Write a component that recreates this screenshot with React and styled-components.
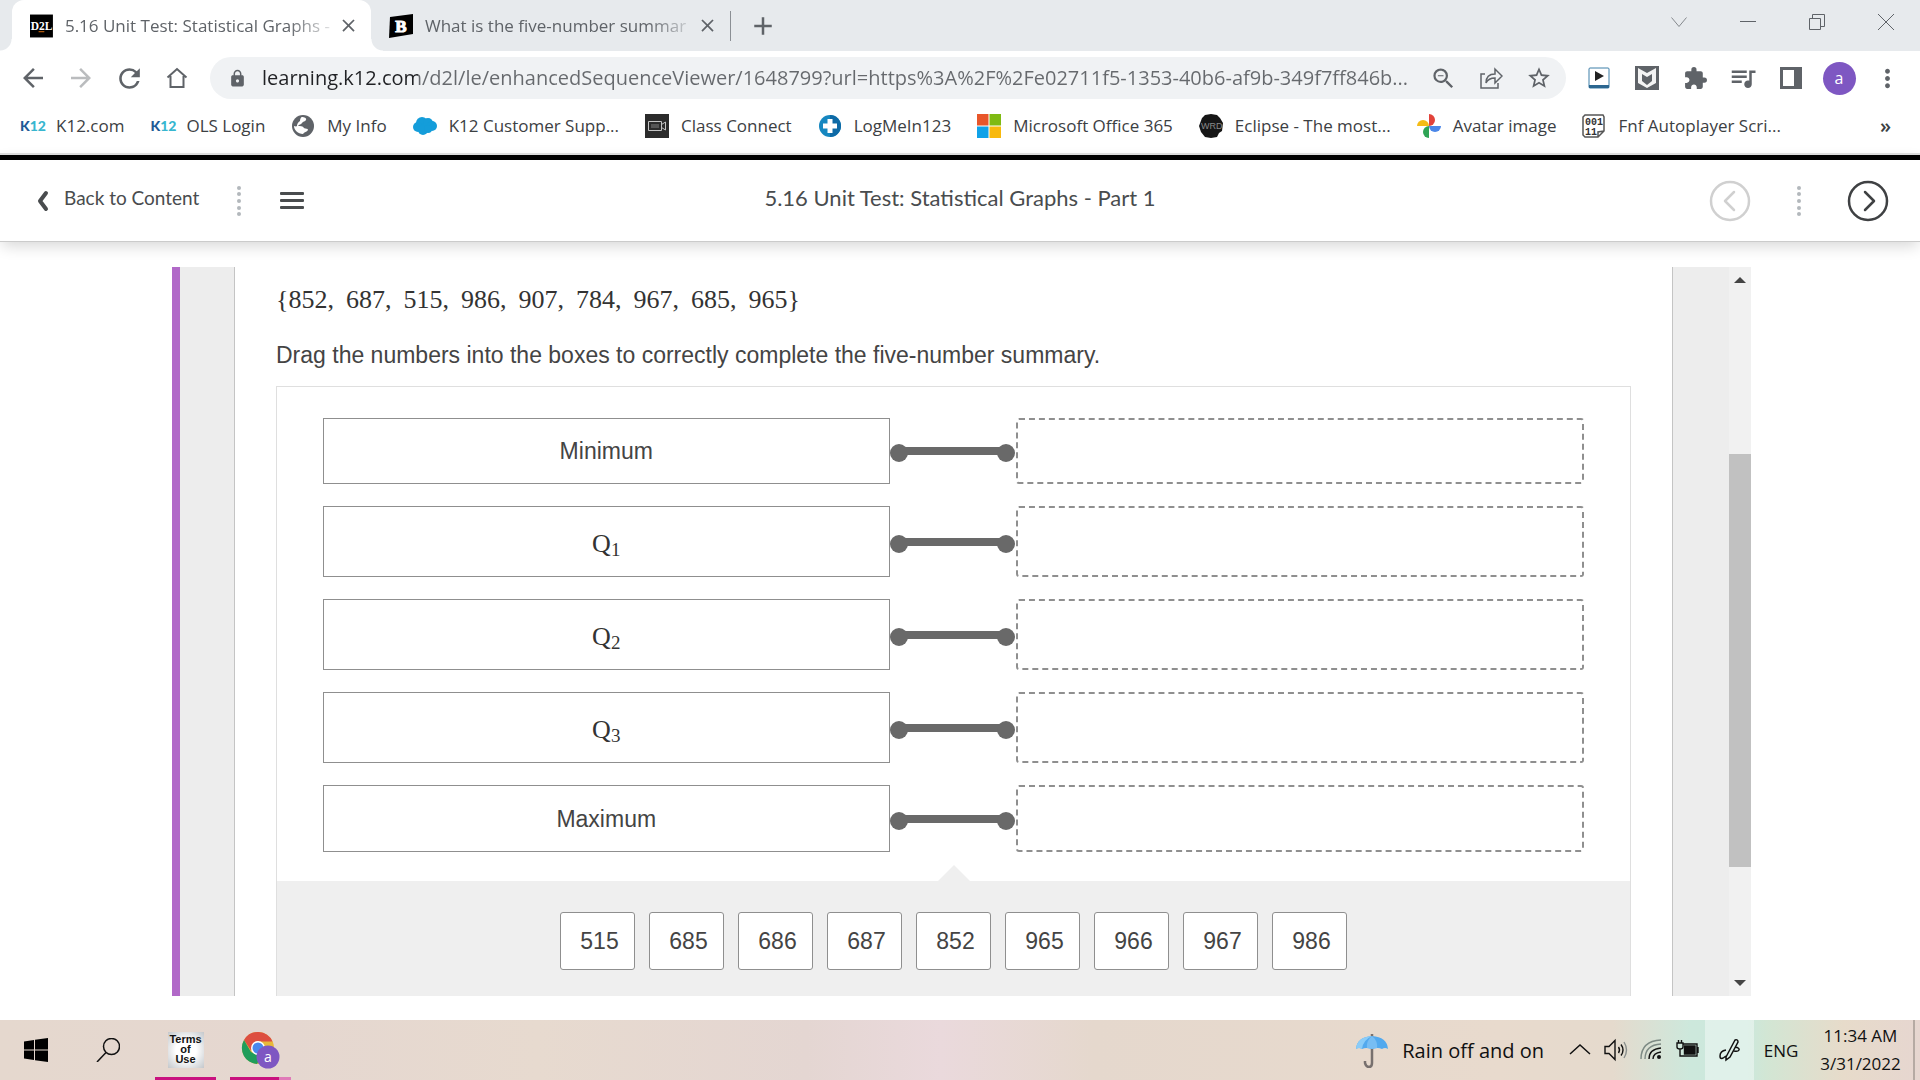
import React from "react";
import styled, { createGlobalStyle, css } from "styled-components";
import {
  MdArrowBack,
  MdArrowForward,
  MdRefresh,
  MdLock,
  MdZoomOut,
  MdStarBorder,
  MdExtension,
  MdQueueMusic,
  MdMoreVert,
  MdClose,
  MdAdd,
} from "react-icons/md";

const GlobalStyle = createGlobalStyle`
  * { box-sizing: border-box; }
  body { margin: 0; background: #fff; }
  button, input { font: inherit; color: inherit; }
  button { border: 0; padding: 0; background: none; cursor: pointer; }
`;

const segoe = `"Open Sans", "Noto Sans", sans-serif`;
const arial = `"Liberation Sans", Arial, sans-serif`;

const Screen = styled.div`
  display: flex;
  flex-direction: column;
  height: 100vh;
  overflow: hidden;
  font-family: ${segoe};
`;

/* ---------- browser chrome ---------- */

const TabStrip = styled.div`
  display: flex;
  align-items: stretch;
  height: 51px;
  padding-left: 12px;
  background: #e7eaed;
  color: #5f6368;
`;

/* the active tab flares out at its foot */
const flare = css`
  position: relative;
  background: #fff;
  &::before,
  &::after {
    content: "";
    position: absolute;
    bottom: 0;
    width: 12px;
    height: 12px;
  }
  &::before {
    right: 100%;
    background: radial-gradient(circle at 0 0, transparent 11px, #fff 12px);
  }
  &::after {
    left: 100%;
    background: radial-gradient(circle at 100% 0, transparent 11px, #fff 12px);
  }
`;

const Tab = styled.div`
  display: flex;
  align-items: center;
  width: 359px;
  padding: 0 11px 0 18px;
  border-radius: 12px 12px 0 0;
  ${(p) => p.$active && flare}
`;

const TabTitle = styled.button`
  flex: 1;
  margin: 0 6px 0 12px;
  white-space: nowrap;
  text-align: left;
  font-size: 17px;
  line-height: 24px;
  mask-image: linear-gradient(to right, #000 84%, rgba(0, 0, 0, 0.2));
`;

const IconButton = styled.button`
  display: flex;
  align-items: center;
  justify-content: center;
  width: ${(p) => p.$w || 48}px;
  height: 32px;
  flex: none;
  color: ${(p) => p.$color || "#5f6368"};
`;

const TabDivider = styled.span`
  align-self: center;
  width: 1px;
  height: 30px;
  background: #8b8f94;
`;

const NewTab = styled(IconButton)`
  align-self: center;
  margin-left: 8px;
`;

const WindowButtons = styled.div`
  display: flex;
  align-items: center;
  height: 44px;
  margin-left: auto;
`;

const Toolbar = styled.div`
  display: flex;
  align-items: center;
  height: 54px;
  padding: 0 9px;
`;

const Omnibox = styled.form`
  display: flex;
  flex: 1;
  align-items: center;
  height: 42px;
  margin: 0 9px;
  padding: 0 3px 0 18px;
  border-radius: 21px;
  background: #f0f2f4;
  color: #5f6368;
`;

/* host in dark, path in grey */
const Address = styled.input`
  flex: 1;
  min-width: 0;
  margin-left: 15px;
  padding: 0;
  border: 0;
  outline: 0;
  font-size: 20px;
  line-height: 30px;
  color: transparent;
  background: linear-gradient(to right, #202124 156px, #66696d 156px);
  background-clip: text;
`;

const Bookmarks = styled.nav`
  display: flex;
  align-items: center;
  height: 48px;
  padding: 0 29px 6px 20px;
  gap: 26px;
`;

const Bookmark = styled.a`
  display: flex;
  align-items: center;
  gap: 12px;
  font-size: 17px;
  line-height: 24px;
  color: #3c4043;
  text-decoration: none;
  white-space: nowrap;
`;

const MoreBookmarks = styled.button`
  margin-left: auto;
  font-size: 20px;
  font-weight: 600;
  line-height: 24px;
  color: #3c4043;
`;

const K12Mark = styled.span`
  width: 24px;
  font-family: Lato, sans-serif;
  font-size: 14px;
  font-weight: 900;
  line-height: 24px;
  color: #38b6cf;
  & b { color: #1d5a96; }
`;

const bookmarks = [
  { label: "K12.com", icon: "k12" },
  { label: "OLS Login", icon: "k12" },
  { label: "My Info", icon: "globe" },
  { label: "K12 Customer Supp...", icon: "cloud" },
  { label: "Class Connect", icon: "camera" },
  { label: "LogMeIn123", icon: "plus" },
  { label: "Microsoft Office 365", icon: "ms" },
  { label: "Eclipse - The most...", icon: "wrd" },
  { label: "Avatar image", icon: "photos" },
  { label: "Fnf Autoplayer Scri...", icon: "script" },
];

const drawings = {
  globe: (
    <>
      <circle cx="12" cy="12" r="11" fill="#5f6368" />
      <path
        d="M11 3c2 0 5 1 4 3-1 2-3 1-4 3s-3 1-4 3c2 0 5 0 6 2 1 1 4 0 4 2-1 2-4 2-5 4-5 0-9-4-9-8 1 0 2 1 3 0 0-2 1-4 3-5 0-2 1-4 2-4z"
        fill="#fff"
      />
    </>
  ),
  cloud: (
    <g fill="#149dda">
      <circle cx="9" cy="9" r="6" />
      <circle cx="5" cy="13" r="5" />
      <circle cx="15" cy="9" r="5" />
      <circle cx="19" cy="12" r="5" />
      <circle cx="10" cy="16" r="5" />
      <circle cx="15" cy="15" r="4" />
    </g>
  ),
  camera: (
    <>
      <path d="M0 0h24v24H0z" fill="#2b2b2b" />
      <path
        d="M3.500 7.500h13v9h-13zM16.500 10.500l4-2.500v8l-4-2.500"
        fill="none"
        stroke="#c4c4c4"
      />
      <path d="M6 10h8v4H6z" fill="#555" />
    </>
  ),
  plus: (
    <>
      <circle cx="12" cy="12" r="11" fill="#1687c0" />
      <path d="M12 1a11 11 0 0 1 0 22z" fill="#0e6aa6" />
      <path d="M9.500 5h5v4.500H19v5h-4.500V19h-5v-4.500H5v-5h4.500z" fill="#fff" />
    </>
  ),
  ms: (
    <>
      <path d="M0 0h11.500v11.500H0z" fill="#e8562a" />
      <path d="M12.500 0H24v11.500H12.500z" fill="#7fba13" />
      <path d="M0 12.500h11.500V24H0z" fill="#10a2e8" />
      <path d="M12.500 12.500H24V24H12.500z" fill="#f8b90d" />
    </>
  ),
  wrd: (
    <>
      <path
        d="M3 4l3-3 6-1 6 1 3 3 3 5-1 8-3 2-2 4-6 1-6-1-4-5-2-6z"
        fill="#161616"
      />
      <text x="2" y="15" fontSize="9" fill="#8a8a8a" fontFamily="Liberation Sans">
        WRD
      </text>
    </>
  ),
  photos: (
    <>
      <path d="M12 0a6 6 0 0 1 0 12z" fill="#e2423a" />
      <path d="M24 12a6 6 0 0 1-12 0z" fill="#4a86e8" />
      <path d="M12 24a6 6 0 0 1 0-12z" fill="#2fa455" />
      <path d="M0 12a6 6 0 0 1 12 0z" fill="#f5bc16" />
    </>
  ),
  script: (
    <>
      <path
        d="M3 1h18l1 2v14l-6 6H3l-2-2V3zM16 23v-5l6-1"
        fill="#fff"
        stroke="#555"
        strokeWidth="1.500"
      />
      <g fontSize="10" fontWeight="700" fontFamily="Liberation Mono" fill="#333">
        <text x="3" y="11">001</text>
        <text x="3" y="21">11</text>
      </g>
    </>
  ),
};

const Favicon = ({ name }) =>
  name === "k12" ? (
    <K12Mark>
      <b>K</b>12
    </K12Mark>
  ) : (
    <svg width="24" height="24" viewBox="0 0 24 24" aria-hidden="true">
      {drawings[name]}
    </svg>
  );

/* thin line icon, used for the window buttons and the tray */
const Line = ({ d, size = 24, width = 1, color = "currentColor", children }) => (
  <svg
    width={size}
    height={size}
    viewBox="0 0 24 24"
    fill="none"
    stroke={color}
    strokeWidth={width}
    aria-hidden="true"
  >
    <path d={d} />
    {children}
  </svg>
);

const ProfileButton = styled(IconButton)`
  & span {
    width: 33px;
    height: 33px;
    border-radius: 50%;
    background: #7e57c2;
    color: #fff;
    font-size: 16px;
    line-height: 32px;
  }
`;

const Browser = () => (
  <header>
    <TabStrip>
      <Tab $active>
        <svg width="24" height="24" viewBox="0 0 24 24" aria-hidden="true">
          <path d="M0 0h24v24H0z" />
          <text
            x="12"
            y="16"
            fontSize="12"
            fontWeight="700"
            textAnchor="middle"
            fill="#fff"
            fontFamily="Liberation Serif"
          >
            D2L
          </text>
          <path d="M9 18h6" stroke="#e87511" />
        </svg>
        <TabTitle>5.16 Unit Test: Statistical Graphs -</TabTitle>
        <IconButton $w={24} aria-label="Close tab">
          <MdClose size={21} />
        </IconButton>
      </Tab>
      <Tab>
        <svg width="24" height="24" viewBox="0 0 24 24" aria-hidden="true">
          <path d="M1 3l23-3v20L0 24z" />
          <text
            x="12"
            y="18"
            fontSize="17"
            fontWeight="700"
            textAnchor="middle"
            fill="#fff"
            stroke="#fff"
            fontFamily="Liberation Serif"
          >
            B
          </text>
        </svg>
        <TabTitle>What is the five-number summar</TabTitle>
        <IconButton $w={24} aria-label="Close tab">
          <MdClose size={21} />
        </IconButton>
      </Tab>
      <TabDivider />
      <NewTab aria-label="New tab">
        <MdAdd size={30} />
      </NewTab>
      <WindowButtons>
        <IconButton $w={69} $color="#85898d" aria-label="Search tabs">
          <Line d="M4.500 7.500l7.500 9 7.500-9" />
        </IconButton>
        <IconButton $w={69} aria-label="Minimize">
          <Line d="M4 11.500h16" />
        </IconButton>
        <IconButton $w={69} aria-label="Restore">
          <Line d="M4.500 8.500h11v11h-11zM7.500 8.500v-4h12v12h-4" />
        </IconButton>
        <IconButton $w={69} aria-label="Close">
          <Line d="M4 4l16 16M20 4L4 20" />
        </IconButton>
      </WindowButtons>
    </TabStrip>
    <Toolbar>
      <IconButton aria-label="Back">
        <MdArrowBack size={30} />
      </IconButton>
      <IconButton $color="#babcbe" aria-label="Forward">
        <MdArrowForward size={30} />
      </IconButton>
      <IconButton aria-label="Reload">
        <MdRefresh size={31} />
      </IconButton>
      <IconButton aria-label="Home">
        <Line width={2} d="M2.500 11.500L12 3l9.500 8.500M5.500 10v11h13V10" />
      </IconButton>
      <Omnibox>
        <MdLock size={19} />
        <Address
          aria-label="Address"
          readOnly
          value="learning.k12.com/d2l/le/enhancedSequenceViewer/1648799?url=https%3A%2F%2Fe02711f5-1353-40b6-af9b-349f7ff846b..."
        />
        <IconButton type="button" aria-label="Zoom">
          <MdZoomOut size={27} />
        </IconButton>
        <IconButton type="button" aria-label="Share">
          <Line
            width={1.5}
            d="M6 8H2v14h17v-5M7 17c0-6 3-9 9-9V3l7 7-7 7v-5c-4 0-7 1-9 5z"
          />
        </IconButton>
        <IconButton type="button" aria-label="Bookmark this page">
          <MdStarBorder size={26} />
        </IconButton>
      </Omnibox>
      <IconButton aria-label="Video extension">
        <svg width="22" height="22" viewBox="0 0 22 22">
          <rect x="1" y="1" width="20" height="20" rx="1" fill="#fff" stroke="#3c7ea8" />
          <path d="M1 18h20v3H1z" fill="#2b6690" />
          <path d="M7 4l9 5-9 5z" fill="#222" />
        </svg>
      </IconButton>
      <IconButton aria-label="McAfee">
        <svg width="24" height="24" viewBox="0 0 24 24">
          <path d="M0 0h24v24H0z" fill="#5f6368" />
          <path d="M3 2l9 5 9-5v15l-9 5-9-5z" fill="#f4f4f4" />
          <path d="M7 8l5 3 5-3v7l-5 4-5-4z" fill="#5f6368" />
        </svg>
      </IconButton>
      <IconButton aria-label="Extensions">
        <MdExtension size={25} />
      </IconButton>
      <IconButton aria-label="Media">
        <MdQueueMusic size={30} />
      </IconButton>
      <IconButton aria-label="Side panel">
        <svg width="22" height="22" viewBox="0 0 22 22">
          <path d="M1.500 1.500h19v19h-19z" fill="#fff" stroke="#5f6368" strokeWidth="3" />
          <path d="M14 1h7v20h-7z" fill="#5f6368" />
        </svg>
      </IconButton>
      <ProfileButton aria-label="Profile">
        <span>a</span>
      </ProfileButton>
      <IconButton aria-label="Menu">
        <MdMoreVert size={29} />
      </IconButton>
    </Toolbar>
    <Bookmarks>
      {bookmarks.map((b) => (
        <Bookmark href="#" key={b.label}>
          <Favicon name={b.icon} />
          {b.label}
        </Bookmark>
      ))}
      <MoreBookmarks aria-label="More bookmarks">»</MoreBookmarks>
    </Bookmarks>
  </header>
);

/* ---------- course page ---------- */

const CourseBar = styled.div`
  position: relative;
  display: grid;
  grid-template-columns: 1fr auto 1fr;
  align-items: center;
  height: 89px;
  padding: 5px 31px 0;
  border-top: 2px solid #dcdcdc;
  border-bottom: 1px solid #cbcbcb;
  box-shadow: inset 0 5px 0 #000, 0 6px 14px -2px rgba(0, 0, 0, 0.16);
  font-family: Lato, sans-serif;
  color: #494c4e;
`;

const BarSide = styled.div`
  display: flex;
  align-items: center;
  justify-content: ${(p) => (p.$end ? "flex-end" : "flex-start")};
  gap: ${(p) => (p.$end ? 46 : 38)}px;
`;

const BackLink = styled.a`
  display: flex;
  align-items: center;
  gap: 11px;
  font-size: 19px;
  line-height: 28px;
  color: inherit;
  text-decoration: none;
  & span {
    padding-bottom: 5px;
  }
`;

const CourseTitle = styled.h1`
  margin: 0;
  padding-bottom: 5px;
  font-size: 22px;
  font-weight: 400;
  line-height: 28px;
`;

const RoundButton = styled.button`
  display: flex;
  color: ${(p) => (p.disabled ? "#d0d0d0" : "#3f4143")};
`;

const Dots = () => (
  <svg width="4" height="32" viewBox="0 0 4 32" fill="#b3b8bc" aria-hidden="true">
    {[3, 9, 16, 23, 29].map((y) => (
      <circle key={y} cx="2" cy={y} r="2" />
    ))}
  </svg>
);

const Arrow = ({ d }) => (
  <svg
    width="42"
    height="42"
    viewBox="0 0 42 42"
    fill="none"
    stroke="currentColor"
    strokeWidth="2.500"
    strokeLinecap="round"
    strokeLinejoin="round"
  >
    <circle cx="21" cy="21" r="19" />
    <path d={d} />
  </svg>
);

const Viewer = styled.main`
  display: flex;
  flex: 1;
  min-height: 0;
  padding: 25px 169px 24px 172px;
`;

const Frame = styled.div`
  display: flex;
  flex: 1;
  min-width: 0;
  padding: 0 56px 0 54px;
  border-left: 8px solid #b169c8;
  background: #ededed;
`;

const Sheet = styled.section`
  flex: 1;
  min-width: 0;
  padding: 15px 41px 0;
  overflow: hidden;
  border: solid #c4c4c4;
  border-width: 0 1px;
  background: #fff;
  font-family: ${arial};
  font-size: 23px;
  line-height: 32px;
  color: #444;
`;

const NumberSet = styled.div`
  display: flex;
  gap: 12px;
  font-family: "Liberation Serif", serif;
  font-size: 26px;
  line-height: 36px;
  color: #333;
`;

const Prompt = styled.p`
  margin: 21px 0 15px;
`;

const Board = styled.div`
  border: solid #dfdfdf;
  border-width: 1px 1px 0;
`;

const Rows = styled.div`
  display: flex;
  flex-direction: column;
  gap: 22px;
  padding: 31px 46px 29px;
`;

const Row = styled.div`
  display: flex;
  height: ${(p) => p.$h}px;
`;

const TermBox = styled.div`
  display: flex;
  flex: 1;
  align-items: center;
  justify-content: center;
  border: 1px solid #8f8f8f;
`;

const Quartile = styled.span`
  padding-top: 4px;
  font-family: "Liberation Serif", serif;
  font-size: 26px;
  line-height: 32px;
  color: #333;
  & sub {
    font-size: 19px;
    line-height: 1;
    vertical-align: -4px;
  }
`;

const DropZone = styled.div`
  flex: 1;
  border: 2px dashed #8f8f8f;
  border-radius: 3px;
`;

const Link = styled.svg`
  align-self: center;
  flex: none;
  fill: #696969;
`;

const Tray = styled.div`
  position: relative;
  display: flex;
  justify-content: center;
  gap: 14px;
  height: 132px;
  padding-top: 31px;
  background: #efefef;
  &::before {
    content: "";
    position: absolute;
    left: 50%;
    top: -16px;
    margin-left: -16px;
    border: solid transparent;
    border-width: 0 16px 16px;
    border-bottom-color: #efefef;
  }
`;

const Chip = styled.button`
  width: 75px;
  height: 58px;
  padding-left: 4px;
  border: 1px solid #8f8f8f;
  border-radius: 3px;
  background: #fff;
`;

const ScrollTrack = styled.div`
  display: flex;
  flex-direction: column;
  align-items: center;
  width: 22px;
  padding: 10px 0;
  background: #f1f1f1;
`;

const ScrollThumb = styled.div`
  width: 100%;
  flex: 413;
  background: #c1c1c1;
`;

const ScrollGap = styled.div`
  flex: ${(p) => p.$grow};
`;

const numbers = [852, 687, 515, 986, 907, 784, 967, 685, 965];
const choices = [515, 685, 686, 687, 852, 965, 966, 967, 986];
const rows = [
  { name: "Minimum", height: 66 },
  { q: 1, height: 71 },
  { q: 2, height: 71 },
  { q: 3, height: 71 },
  { name: "Maximum", height: 67 },
];

const Course = () => (
  <>
    <CourseBar>
      <BarSide>
        <BackLink href="#">
          <svg width="22" height="24" viewBox="0 0 22 24" aria-hidden="true">
            <path
              d="M15 4L9 12l6 8"
              fill="none"
              stroke="#494c4e"
              strokeWidth="4"
              strokeLinecap="round"
              strokeLinejoin="round"
            />
          </svg>
          <span>Back to Content</span>
        </BackLink>
        <Dots />
        <IconButton $w={26} $color="#494c4e" aria-label="Open navigation">
          <svg width="24" height="20" viewBox="0 0 24 20" fill="currentColor">
            <rect y="1" width="24" height="3" rx="1" />
            <rect y="8" width="24" height="3" rx="1" />
            <rect y="15" width="24" height="3" rx="1" />
          </svg>
        </IconButton>
      </BarSide>
      <CourseTitle>5.16 Unit Test: Statistical Graphs - Part 1</CourseTitle>
      <BarSide $end>
        <RoundButton disabled aria-label="Previous">
          <Arrow d="M25 12l-9 9 9 9" />
        </RoundButton>
        <Dots />
        <RoundButton aria-label="Next">
          <Arrow d="M18 12l9 9-9 9" />
        </RoundButton>
      </BarSide>
    </CourseBar>
    <Viewer>
      <Frame>
        <Sheet>
          <NumberSet>
            {numbers.map((n, i) => (
              <span key={n}>
                {i === 0 && "{"}
                {n}
                {i < numbers.length - 1 ? "," : "}"}
              </span>
            ))}
          </NumberSet>
          <Prompt>
            Drag the numbers into the boxes to correctly complete the
            five-number summary.
          </Prompt>
          <Board>
            <Rows>
              {rows.map((r) => (
                <Row key={r.name || r.q} $h={r.height}>
                  <TermBox>
                    {r.name || (
                      <Quartile>
                        Q<sub>{r.q}</sub>
                      </Quartile>
                    )}
                  </TermBox>
                  <Link width="126" height="24" viewBox="0 0 126 24">
                    <circle cx="9" cy="14" r="9" />
                    <path d="M9 8h108v8H9z" />
                    <circle cx="116" cy="14" r="9" />
                  </Link>
                  <DropZone />
                </Row>
              ))}
            </Rows>
            <Tray>
              {choices.map((n) => (
                <Chip key={n} draggable>
                  {n}
                </Chip>
              ))}
            </Tray>
          </Board>
        </Sheet>
      </Frame>
      <ScrollTrack>
        <svg width="12" height="6" viewBox="0 0 12 6">
          <path d="M0 6l6-6 6 6z" fill="#444" />
        </svg>
        <ScrollGap $grow={171} />
        <ScrollThumb />
        <ScrollGap $grow={113} />
        <svg width="12" height="6" viewBox="0 0 12 6">
          <path d="M0 0l6 6 6-6z" fill="#444" />
        </svg>
      </ScrollTrack>
    </Viewer>
  </>
);

/* ---------- taskbar ---------- */

const Bar = styled.footer`
  display: flex;
  align-items: stretch;
  height: 60px;
  background: linear-gradient(
    to right,
    #e5d8ce 0%,
    #e5d7d0 15%,
    #e7dacf 28%,
    #e4d6d2 42%,
    #ead9dc 49%,
    #e5d8cd 57%,
    #e8dacd 78%,
    #e5dacd 84%,
    #cde8dc 88%,
    #cbe8dc 91%,
    #d2e6d4 92%,
    #e7dbca 96%,
    #e6d6d0 100%
  );
  color: #111;
`;

const Task = styled.button`
  display: flex;
  align-items: center;
  justify-content: center;
  width: ${(p) => p.$w || 72}px;
  flex: none;
  background: ${(p) => (p.$lit ? "rgba(255, 255, 255, 0.4)" : "none")};
`;

/* the lighter end of the underline marks a second window */
const AppTask = styled(Task)`
  margin: 0 3px 0 11px;
  padding-top: 3px;
  border-bottom: 3px solid #c9117f;
  border-image: linear-gradient(
      to right,
      #c9117f ${(p) => (p.$stacked ? 80 : 100)}%,
      #e07ab8 0
    )
    1;
  border-width: 0 0 3px;
`;

const Tile = styled.span`
  width: 36px;
  height: 36px;
  padding-top: 2px;
  background: radial-gradient(#fff 40%, #c3c7cb);
  font-family: ${arial};
  font-size: 11px;
  font-weight: 700;
  line-height: 10px;
  text-align: center;
`;

const Weather = styled.button`
  display: flex;
  align-items: center;
  gap: 14px;
  margin-left: auto;
  padding: 1px 18px 0 0;
  font-size: 20px;
  line-height: 28px;
`;

const Language = styled(Task)`
  font-size: 17px;
`;

const Clock = styled(Task)`
  flex-direction: column;
  font-size: 17px;
  line-height: 28px;
`;

const ShowDesktop = styled.button`
  width: 7px;
  border-left: 2px solid #b5aaa3;
`;

const Taskbar = () => (
  <Bar>
    <Task aria-label="Start">
      <svg width="24" height="24" viewBox="0 0 24 24">
        <path d="M0 3.500L10 2v9.500H0zM11 1.800L24 0v11.500H11zM0 12.500h10V22L0 20.500zM11 12.500h13V24l-13-1.800z" />
      </svg>
    </Task>
    <Task aria-label="Search">
      <Line width={1.5} d="M10 14.500L1 24">
        <circle cx="15.500" cy="8.500" r="8" />
      </Line>
    </Task>
    <AppTask $w={61}>
      <Tile>
        Terms
        <br />
        of
        <br />
        Use
      </Tile>
    </AppTask>
    <AppTask $w={61} $stacked aria-label="Google Chrome">
      <svg width="40" height="40" viewBox="0 0 40 40">
        <circle cx="17" cy="18" r="16" fill="#e8b93a" />
        <path d="M3 10a16 16 0 0 1 28.500 1.500H17l-7 9z" fill="#dd4f41" />
        <path d="M3 10a16 16 0 0 0 13 24l6-11-5 2-7-3z" fill="#1f9d5b" />
        <circle cx="17" cy="18" r="7" fill="#fff" />
        <circle cx="17" cy="18" r="5.500" fill="#4a87ee" />
        <circle cx="27" cy="27" r="11.500" fill="#7e57c2" />
        <text
          x="27"
          y="32"
          fontSize="14"
          textAnchor="middle"
          fill="#fff"
          fontFamily="Open Sans"
        >
          a
        </text>
      </svg>
    </AppTask>
    <Weather>
      <svg width="32" height="34" viewBox="0 0 32 34" aria-hidden="true">
        <path
          d="M16 0v29q0 4-3 4t-4-4v-2"
          fill="none"
          stroke="#77706e"
          strokeWidth="2.500"
        />
        <path d="M0 15Q1 3 16 2q15 1 16 13-3-2-6 0-4-2-10 0-6-2-10 0-3-2-6 0z" fill="#52a9ee" />
        <path d="M0 15Q1 3 16 2 7 6 6 15q-3-2-6 0z" fill="#8accf8" />
        <path d="M16 2q-6 5-5 12l5 1 5-1q1-7-5-12z" fill="#77bdf3" />
      </svg>
      Rain off and on
    </Weather>
    <Task $w={36} aria-label="Show hidden icons">
      <Line width={1.5} d="M2 16l10-9 10 9" />
    </Task>
    <Task $w={36} aria-label="Volume">
      <Line width={1.4} d="M1 8.500h4l6-6v19l-6-6H1zM14.500 9q2 3 0 6M17 6.500q4 5.500 0 11">
        <path d="M20 4q5 8 0 16" stroke="#8a8f8c" />
      </Line>
    </Task>
    <Task $w={36} aria-label="Network">
      <Line width={1.4} d="M13 21q0-6 8-7M9 21q0-10 12-11">
        <path d="M5 21Q5 7 21 6M1 21Q1 3 21 2" stroke="#7d8a84" />
        <circle cx="19" cy="19" r="2" fill="#111" stroke="none" />
      </Line>
    </Task>
    <Task $w={35} aria-label="Battery">
      <Line width={1.4} d="M7 6h14v12H7M22 9v6M1 5h6v4q0 2-3 2t-3-2zM2.500 2v3M5.500 2v3M4 11v7h3">
        <path d="M8.500 8H19v8H8.500z" fill="#111" />
      </Line>
    </Task>
    <Task $w={49} $lit aria-label="Pen">
      <Line width={1.5} d="M8 19L17 2q3-1 3 2l-8 15-4 3zM8 12q-6 1-6 6t6 0M17 9q5 1 4 3t-5 1" />
    </Task>
    <Language $w={54}>ENG</Language>
    <Clock $w={105}>
      <span>11:34 AM</span>
      <span>3/31/2022</span>
    </Clock>
    <ShowDesktop aria-label="Show desktop" />
  </Bar>
);

export default function App() {
  return (
    <Screen>
      <GlobalStyle />
      <Browser />
      <Course />
      <Taskbar />
    </Screen>
  );
}
